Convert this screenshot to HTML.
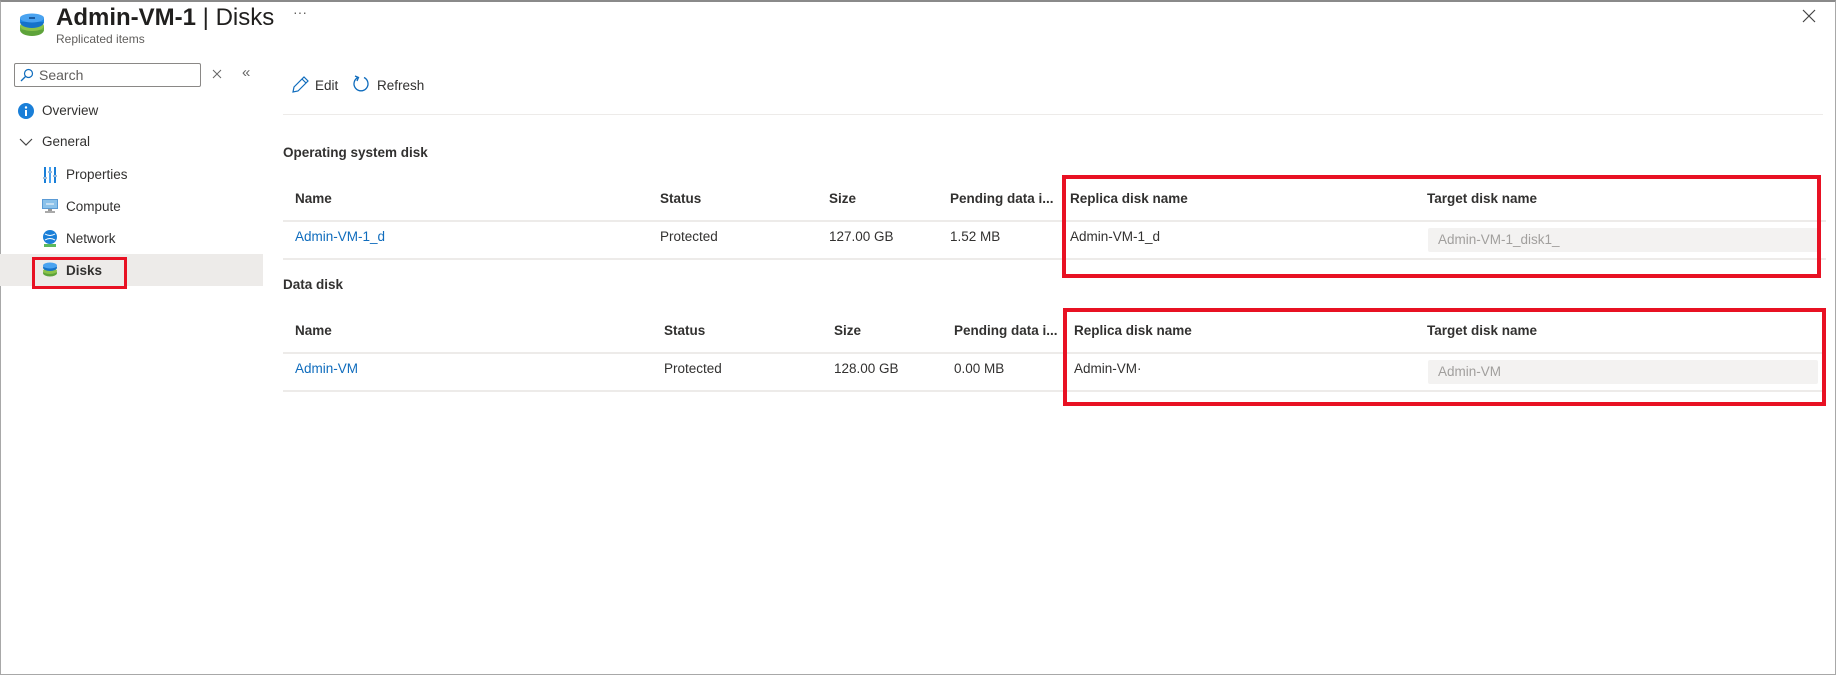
<!DOCTYPE html>
<html><head><meta charset="utf-8"><style>
*{margin:0;padding:0;box-sizing:border-box}
body{width:1836px;height:675px;background:#fff;font-family:"Liberation Sans",sans-serif;color:#323130;position:relative;overflow:hidden;font-size:13.5px}
.a{position:absolute;white-space:nowrap}
.b{font-weight:bold}
.ln{position:absolute;height:2px;background:#edebe9}
.red{position:absolute;border:4px solid #e81123}
.lk{color:#0f6cbd}
.inp{position:absolute;background:#f3f2f1;border-radius:2px;color:#a19f9d;padding:4px 10px;font-size:13.5px;line-height:16px}
</style></head><body>
<div style="position:absolute;inset:0;border:1px solid #a8a8a8;border-top:2px solid #8a8a8a"></div>
<svg class="a" style="left:19px;top:13px" width="26" height="24" viewBox="0 0 26 24"><ellipse cx="13" cy="17" rx="12" ry="6" fill="#5ea33a"/><rect x="1" y="13" width="24" height="4" fill="#6cb33f"/><ellipse cx="13" cy="13" rx="12" ry="5" fill="#8bc34a"/><ellipse cx="13" cy="9" rx="12" ry="6" fill="#1572c9"/><rect x="1" y="5" width="24" height="4" fill="#1e88e5"/><ellipse cx="13" cy="5" rx="12" ry="4.5" fill="#4aa3f0"/><rect x="10" y="4" width="6" height="2" fill="#1a5aa0"/></svg>
<div class="a" style="left:56px;top:4px;font-size:24px;color:#201f1e"><span class="b">Admin-VM-1</span> | Disks</div>
<div class="a" style="left:56px;top:32px;font-size:12px;color:#605e5c">Replicated items</div>
<div class="a" style="left:293px;top:4px;font-size:14px;color:#605e5c">···</div>
<svg class="a" style="left:1802px;top:9px" width="14" height="14"><path d="M1 1L13 13M13 1L1 13" stroke="#444" stroke-width="1.2"/></svg>
<div class="a" style="left:14px;top:63px;width:187px;height:24px;border:1px solid #8a8886;border-radius:2px"></div>
<svg class="a" style="left:20px;top:68px" width="14" height="14"><circle cx="8.5" cy="5.5" r="4" fill="none" stroke="#0f6cbd" stroke-width="1.2"/><path d="M5.5 8.5L1 13" stroke="#0f6cbd" stroke-width="1.3"/></svg>
<div class="a" style="left:39px;top:67px;font-size:14px;color:#605e5c">Search</div>
<svg class="a" style="left:212px;top:69px" width="10" height="10"><path d="M1 1L9 9M9 1L1 9" stroke="#666" stroke-width="1"/></svg>
<div class="a" style="left:242px;top:64px;font-size:15px;color:#666">«</div>
<svg class="a" style="left:18px;top:103px" width="16" height="16"><circle cx="8" cy="8" r="8" fill="#1a7fd8"/><rect x="7" y="7" width="2" height="6" fill="#fff"/><circle cx="8" cy="4.5" r="1.2" fill="#fff"/></svg>
<div class="a" style="left:42px;top:103px">Overview</div>
<svg class="a" style="left:19px;top:137px" width="14" height="10"><path d="M1 2L7 8L13 2" fill="none" stroke="#444" stroke-width="1.2"/></svg>
<div class="a" style="left:42px;top:134px">General</div>
<svg class="a" style="left:43px;top:167px" width="14" height="16"><rect x="1" y="0" width="2" height="16" fill="#1a7fd8"/><rect x="6" y="0" width="2" height="16" fill="#4aa3f0"/><rect x="11" y="0" width="2" height="16" fill="#1a7fd8"/><rect x="0" y="10" width="4" height="2" fill="#9bd"/><rect x="5" y="4" width="4" height="2" fill="#9bd"/><rect x="10" y="8" width="4" height="2" fill="#9bd"/></svg>
<div class="a" style="left:66px;top:167px">Properties</div>
<svg class="a" style="left:42px;top:198px" width="16" height="16"><rect x="0" y="1" width="16" height="10" fill="#5b9bd5"/><rect x="1" y="2" width="14" height="8" fill="#8cc2ea"/><path d="M4 6h8" stroke="#fff"/><rect x="6" y="11" width="4" height="2" fill="#999"/><rect x="3" y="13" width="10" height="2" fill="#aaa"/></svg>
<div class="a" style="left:66px;top:199px">Compute</div>
<svg class="a" style="left:42px;top:230px" width="16" height="17"><circle cx="8" cy="7" r="7" fill="#1a7fd8"/><path d="M3 4q5 3 10 0M3 10q5-3 10 0" stroke="#fff" fill="none"/><rect x="2" y="14" width="12" height="3" fill="#5cb85c"/></svg>
<div class="a" style="left:66px;top:231px">Network</div>
<div class="a" style="left:0;top:254px;width:263px;height:32px;background:#edebe9"></div>
<svg class="a" style="left:42px;top:262px" width="16" height="15"><ellipse cx="8" cy="11" rx="7" ry="3.5" fill="#5ea33a"/><ellipse cx="8" cy="9" rx="7" ry="3" fill="#8bc34a"/><ellipse cx="8" cy="5.5" rx="7" ry="3.5" fill="#1572c9"/><ellipse cx="8" cy="3.5" rx="7" ry="3" fill="#4aa3f0"/></svg>
<div class="a b" style="left:66px;top:263px">Disks</div>
<div class="red" style="left:32px;top:257px;width:95px;height:32px;border-width:3px"></div>
<svg class="a" style="left:291px;top:76px" width="18" height="18"><path d="M2 16L3 11L13 1L17 5L7 15Z M11 3L15 7" fill="none" stroke="#0f6cbd" stroke-width="1.2"/></svg>
<div class="a" style="left:315px;top:78px">Edit</div>
<svg class="a" style="left:352px;top:75px" width="18" height="18"><path d="M6 2.5A7 7 0 1 0 12 2.5" fill="none" stroke="#0f6cbd" stroke-width="1.3"/><path d="M3 1L6.5 2.5L5 6" fill="none" stroke="#0f6cbd" stroke-width="1.3"/></svg>
<div class="a" style="left:377px;top:78px">Refresh</div>
<div class="ln" style="left:283px;top:114px;width:1540px;height:1px"></div>
<div class="a b" style="left:283px;top:145px">Operating system disk</div>
<div class="a b" style="left:295px;top:191px">Name</div>
<div class="a b" style="left:660px;top:191px">Status</div>
<div class="a b" style="left:829px;top:191px">Size</div>
<div class="a b" style="left:950px;top:191px">Pending data i...</div>
<div class="a b" style="left:1070px;top:191px">Replica disk name</div>
<div class="a b" style="left:1427px;top:191px">Target disk name</div>
<div class="ln" style="left:283px;top:220px;width:1543px"></div>
<div class="a lk" style="left:295px;top:229px">Admin-VM-1_d</div>
<div class="a" style="left:660px;top:229px">Protected</div>
<div class="a" style="left:829px;top:229px">127.00 GB</div>
<div class="a" style="left:950px;top:229px">1.52 MB</div>
<div class="a" style="left:1070px;top:229px">Admin-VM-1_d</div>
<div class="inp" style="left:1428px;top:228px;width:392px;height:24px">Admin-VM-1_disk1_</div>
<div class="ln" style="left:283px;top:258px;width:1543px"></div>
<div class="red" style="left:1062px;top:175px;width:759px;height:103px"></div>
<div class="a b" style="left:283px;top:277px">Data disk</div>
<div class="a b" style="left:295px;top:323px">Name</div>
<div class="a b" style="left:664px;top:323px">Status</div>
<div class="a b" style="left:834px;top:323px">Size</div>
<div class="a b" style="left:954px;top:323px">Pending data i...</div>
<div class="a b" style="left:1074px;top:323px">Replica disk name</div>
<div class="a b" style="left:1427px;top:323px">Target disk name</div>
<div class="ln" style="left:283px;top:352px;width:1543px"></div>
<div class="a lk" style="left:295px;top:361px">Admin-VM</div>
<div class="a" style="left:664px;top:361px">Protected</div>
<div class="a" style="left:834px;top:361px">128.00 GB</div>
<div class="a" style="left:954px;top:361px">0.00 MB</div>
<div class="a" style="left:1074px;top:361px">Admin-VM·</div>
<div class="inp" style="left:1428px;top:360px;width:390px;height:24px">Admin-VM</div>
<div class="ln" style="left:283px;top:390px;width:1543px"></div>
<div class="red" style="left:1063px;top:308px;width:763px;height:98px"></div>
</body></html>
